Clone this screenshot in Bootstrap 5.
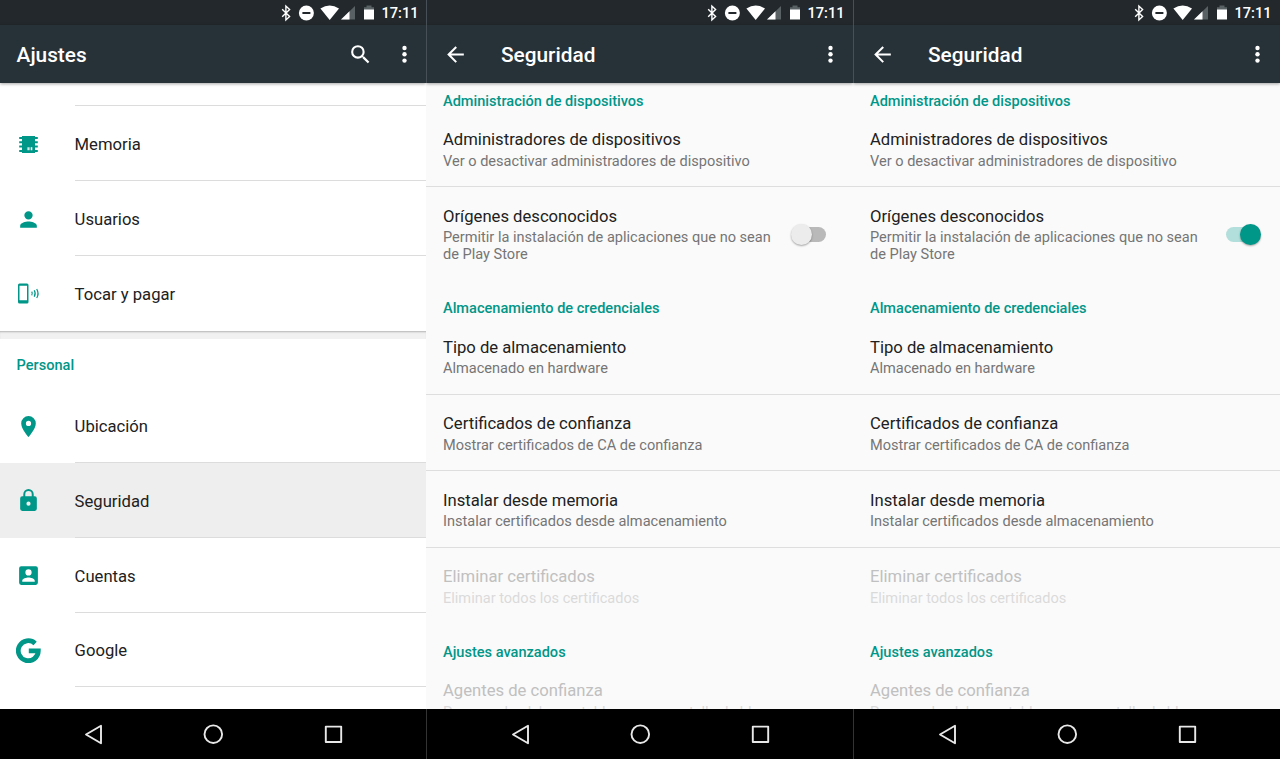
<!DOCTYPE html>
<html lang="es">
<head>
<meta charset="utf-8">
<meta name="viewport" content="width=device-width, initial-scale=1">
<title>Ajustes</title>
<link href="https://cdn.jsdelivr.net/npm/bootstrap@5.3.0/dist/css/bootstrap.min.css" rel="stylesheet">
<style>
:root{--teal:#009688}
body{font-family:Roboto,sans-serif;background:#fff;color:#212121;width:1280px}
svg{display:block;flex:none}
.phones{display:grid;grid-template-columns:426px 427px 427px;height:759px}
.phone{height:759px;overflow:hidden;background:#fafafa}
.phone:not(:first-child) .statusbar,.phone:not(:first-child) .appbar{border-left:1px solid #465056}
.phone:not(:first-child) .softkeys{border-left:1px solid #333}
.statusbar{height:25px;background:#22282b;color:#fff;padding-right:8.5px;font-size:14.6px;font-weight:500;flex:none}
.phone:first-child .statusbar{padding-right:7.5px}
.statusbar span{padding-top:2px}
.appbar{height:58px;background:#263238;color:#fff;flex:none;box-shadow:0 1px 3px rgba(0,0,0,.35);z-index:1;padding:0 6.5px 0 16.6px}
.phone:not(:first-child) .appbar{padding:0 7.5px 0 16px}
.appbar h1{font-size:20.8px;font-weight:500;line-height:24px;padding-top:1px}
.search-icon{margin-right:21.5px}
.back-icon{margin-right:33px}
.screen{flex:1 1 0;min-height:0;overflow:hidden}
.softkeys{height:50px;background:#000;flex:none}
.tile{height:74.8px;padding-left:16.3px}
.tile-icon{width:58.3px;color:var(--teal);padding-top:1px}
.tile-label{font-size:16.65px;border-bottom:1px solid #dcdcdc;padding-top:5px}
.plain .tile-label{border-bottom-color:transparent}
.first-gap{height:23.4px;flex:none;margin-left:74.6px;border-bottom:1px solid #dcdcdc}
.gap-band{height:8px;background:#f1f1f1;box-shadow:inset 0 2px 2px -1px rgba(0,0,0,.25)}
.picked{background:#eee}
.heading{color:var(--teal);font-size:14.57px;font-weight:500}
.personal{height:49.4px;padding:4px 0 0 16.6px}
.group{height:37.5px;padding:19.4px 17px 0;line-height:17px}
.group-top{height:28px;padding-top:10px}
.pref{padding:18.3px 17px 17.7px;border-bottom:1px solid #dedede}
.pref.open{border-bottom-color:transparent}
.pref-title{font-size:16.65px;line-height:22px}
.pref-sub{font-size:14.57px;line-height:17px;margin-top:1.4px;margin-bottom:-.9px;color:#757575}
.pref-text{width:348px}
.off .pref-title{color:#c0c0c0}.off .pref-sub{color:#dadada}
.track{width:34px;height:15px;border-radius:8px;background:#b9b9b9;margin-left:-20px}
.knob{width:21px;height:21px;border-radius:50%;background:#ececec;box-shadow:0 1px 2px rgba(0,0,0,.35)}
.toggle.on .track{background:#b2dfdb;margin-left:0}
.toggle.on .knob{background:var(--teal);margin-left:-20px}
</style>
</head>
<body>
<svg width="0" height="0" class="position-absolute" aria-hidden="true">
<defs>
<g id="status">
<path d="M2.200 9.200 9.600 16.600 5.900 20V6L9.600 9.400 2.200 16.800" fill="none" stroke="#fff" stroke-width="1.400"/>
<circle cx="26.400" cy="13" r="7.500" fill="#fff"/><path d="M22.400 13h8" stroke="#22282b" stroke-width="2"/>
<path d="M40.400 8.600Q49.700 2.400 59 8.600L49.700 20Z" fill="#fff"/>
<path d="M61 19.500 75 6V19.500Z" fill="#596165"/><path d="M61 19.500 69.500 11.300V19.500Z" fill="#fff"/>
<path d="M84 7.200h2.500V5.500h5v1.700H94V10H84Z" fill="#596165"/><path d="M84 9.500h10v10H84Z" fill="#fff"/>
</g>
<g id="keys" fill="none" stroke="#e8e8e8" stroke-width="1.900" stroke-linejoin="round">
<path d="M86 25.500 101 16.800V34.200Z"/><circle cx="213.300" cy="25.200" r="8.800"/><rect x="325.800" y="17.600" width="15.400" height="15.400"/>
</g>
<g id="dots" fill="#fff"><circle cx="3" cy="3" r="2.200"/><circle cx="3" cy="9.300" r="2.200"/><circle cx="3" cy="15.600" r="2.200"/></g>
<path id="back" d="M20 11H7.800l5.600-5.600L12 4l-8 8 8 8 1.400-1.400L7.800 13H20z" fill="#fff"/>
</defs>
</svg>
<main class="phones">
<section class="phone d-flex flex-column">
 <div class="statusbar d-flex align-items-center justify-content-end"><svg width="101" height="25"><use href="#status"/></svg><span>17:11</span></div>
 <header class="appbar d-flex align-items-center position-relative"><h1 class="m-0 me-auto">Ajustes</h1>
  <svg class="search-icon" width="25" height="25" viewBox="0 0 24 24" fill="#fff"><path d="M15.500 14h-.79l-.28-.27A6.470 6.470 0 0 0 16 9.500 6.500 6.500 0 1 0 9.500 16c1.610 0 3.090-.59 4.230-1.570l.27.28v.79l5 4.990L20.490 19l-4.990-5zm-6 0a4.500 4.500 0 1 1 0-9 4.500 4.500 0 0 1 0 9z"/></svg>
  <svg width="25" height="19" viewBox="-6.500 0 25 19"><use href="#dots"/></svg>
 </header>
 <div class="screen bg-white">
  <div class="first-gap"></div>
  <div class="tile d-flex"><div class="tile-icon d-flex align-items-center"><svg width="25" height="25" viewBox="0 0 25 25" fill="currentColor"><path fill-rule="evenodd" d="M6 4h13v1h2.800v2H19v2.300h2.800v2H19v2.300h2.800v2H19v2.300h2.800v2H19V21H6v-1.100H3.200v-2H6v-2.300H3.200v-2H6v-2.300H3.200v-2H6V7H3.200V5H6zM11.500 15.300v2.900h1.300v-2.900zm2 0v2.900h.8v-2.900zm1.500 0v2.900h1.300v-2.900z"/></svg></div><div class="tile-label flex-fill d-flex align-items-center">Memoria</div></div>
  <div class="tile d-flex"><div class="tile-icon d-flex align-items-center"><svg width="25" height="25" viewBox="0 0 24 24" fill="currentColor"><path d="M12 12a4 4 0 1 0 0-8 4 4 0 0 0 0 8zm0 2c-2.670 0-8 1.340-8 4v2h16v-2c0-2.660-5.330-4-8-4z"/></svg></div><div class="tile-label flex-fill d-flex align-items-center">Usuarios</div></div>
  <div class="tile plain d-flex"><div class="tile-icon d-flex align-items-center"><svg width="25" height="25" viewBox="0 0 25 25"><path fill="currentColor" fill-rule="evenodd" d="M3.500 2.500h7.500q1.500 0 1.500 1.500v17q0 1.500-1.500 1.500H3.500q-1.500 0-1.500-1.500V4q0-1.500 1.500-1.500zM3.500 4.700v14.600h7.500V4.700z"/><path d="M15.700 10.700q1.200 1.800 0 3.600M18.200 9.300q2 3.200 0 6.400M20.700 8q2.700 4.500 0 9" fill="none" stroke="currentColor" stroke-width="1.200"/></svg></div><div class="tile-label flex-fill d-flex align-items-center">Tocar y pagar</div></div>
  <div class="gap-band"></div>
  <h2 class="heading personal m-0 d-flex align-items-center">Personal</h2>
  <div class="tile d-flex"><div class="tile-icon d-flex align-items-center"><svg width="25" height="25" viewBox="0 0 24 24" fill="currentColor"><path d="M12 2a7 7 0 0 0-7 7c0 5.250 7 13 7 13s7-7.750 7-13a7 7 0 0 0-7-7zm0 9.500a2.500 2.500 0 1 1 0-5 2.500 2.500 0 0 1 0 5z"/></svg></div><div class="tile-label flex-fill d-flex align-items-center">Ubicación</div></div>
  <div class="tile picked d-flex"><div class="tile-icon d-flex align-items-center"><svg width="25" height="25" viewBox="0 0 24 24" fill="currentColor"><path d="M18 8h-1V6A5 5 0 0 0 7 6v2H6a2 2 0 0 0-2 2v10a2 2 0 0 0 2 2h12a2 2 0 0 0 2-2V10a2 2 0 0 0-2-2zm-6 9a2 2 0 1 1 0-4 2 2 0 0 1 0 4zm3.100-9H8.900V6a3.100 3.100 0 0 1 6.200 0z"/></svg></div><div class="tile-label flex-fill d-flex align-items-center">Seguridad</div></div>
  <div class="tile d-flex"><div class="tile-icon d-flex align-items-center"><svg width="25" height="25" viewBox="0 0 24 24" fill="currentColor"><path d="M3 5v14a2 2 0 0 0 2 2h14a2 2 0 0 0 2-2V5a2 2 0 0 0-2-2H5a2 2 0 0 0-2 2zm12 4a3 3 0 1 1-6 0 3 3 0 0 1 6 0zm-9 8c0-2 4-3.100 6-3.100s6 1.100 6 3.100v1H6z"/></svg></div><div class="tile-label flex-fill d-flex align-items-center">Cuentas</div></div>
  <div class="tile d-flex"><div class="tile-icon d-flex align-items-center"><svg width="25" height="25" viewBox="0 0 25 25"><path d="M19.100 5.400A10 10 0 1 0 22.300 12.900H12.800" fill="none" stroke="currentColor" stroke-width="4.800"/></svg></div><div class="tile-label flex-fill d-flex align-items-center">Google</div></div>
 </div>
 <footer class="softkeys"><svg width="426" height="50"><use href="#keys"/></svg></footer>
</section>
<section class="phone d-flex flex-column" id="security">
 <div class="statusbar d-flex align-items-center justify-content-end"><svg width="101" height="25"><use href="#status"/></svg><span>17:11</span></div>
 <header class="appbar d-flex align-items-center position-relative"><svg class="back-icon" width="25" height="25" viewBox="0 0 24 24"><use href="#back"/></svg><h1 class="m-0 me-auto">Seguridad</h1>
  <svg width="25" height="19" viewBox="-6.500 0 25 19"><use href="#dots"/></svg>
 </header>
 <div class="screen">
  <h2 class="heading group group-top m-0">Administración de dispositivos</h2>
  <div class="pref"><div class="pref-title">Administradores de dispositivos</div><div class="pref-sub">Ver o desactivar administradores de dispositivo</div></div>
  <div class="pref open d-flex align-items-center"><div class="pref-text"><div class="pref-title">Orígenes desconocidos</div><div class="pref-sub">Permitir la instalación de aplicaciones que no sean<br>de Play Store</div></div><div class="toggle d-flex align-items-center"><div class="knob position-relative"></div><div class="track"></div></div></div>
  <h2 class="heading group m-0">Almacenamiento de credenciales</h2>
  <div class="pref"><div class="pref-title">Tipo de almacenamiento</div><div class="pref-sub">Almacenado en hardware</div></div>
  <div class="pref"><div class="pref-title">Certificados de confianza</div><div class="pref-sub">Mostrar certificados de CA de confianza</div></div>
  <div class="pref"><div class="pref-title">Instalar desde memoria</div><div class="pref-sub">Instalar certificados desde almacenamiento</div></div>
  <div class="pref open off"><div class="pref-title">Eliminar certificados</div><div class="pref-sub">Eliminar todos los certificados</div></div>
  <h2 class="heading group m-0">Ajustes avanzados</h2>
  <div class="pref off"><div class="pref-title">Agentes de confianza</div><div class="pref-sub">Para usarlo, debes establecer una pantalla de bloqueo</div></div>
 </div>
 <footer class="softkeys"><svg width="426" height="50"><use href="#keys"/></svg></footer>
</section>
</main>
<script src="https://cdn.jsdelivr.net/npm/bootstrap@5.3.0/dist/js/bootstrap.bundle.min.js"></script>
<script>
// The third phone shows the same screen with unknown sources switched on.
const enabled = document.getElementById('security').cloneNode(true);
enabled.removeAttribute('id');
const toggle = enabled.querySelector('.toggle');
toggle.classList.add('on', 'ms-2');
toggle.append(toggle.querySelector('.knob'));
document.querySelector('.phones').append(enabled);
</script>
</body>
</html>
